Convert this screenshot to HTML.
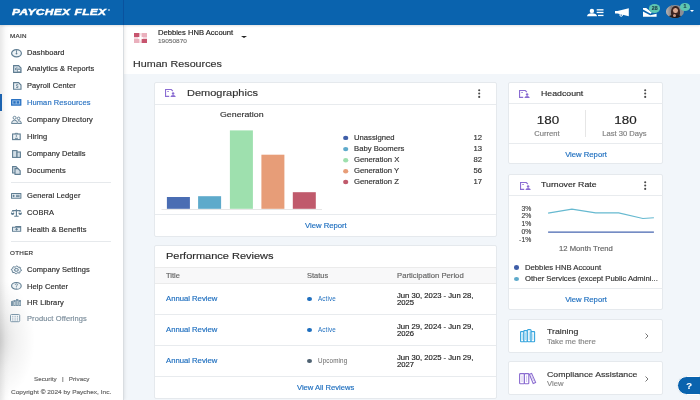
<!DOCTYPE html>
<html><head><meta charset="utf-8">
<style>
*{margin:0;padding:0;box-sizing:border-box}
html,body{width:700px;height:400px;overflow:hidden;background:#f2f6fa;font-family:"Liberation Sans",sans-serif;color:#333}
.a{position:absolute;white-space:nowrap}
svg{position:absolute;overflow:visible}
#hdr{position:absolute;left:0;top:0;width:700px;height:25px;background:#0a63ae;z-index:5;box-shadow:0 1px 2px rgba(0,0,0,0.12)}
#side{position:absolute;left:0;top:25px;width:124px;height:375px;background:#fff;border-right:1px solid #d9dde1;box-shadow:1px 0 3px rgba(0,0,0,0.08);z-index:2}
#top{position:absolute;left:124px;top:25px;width:576px;height:48.5px;background:#fff}
.card{position:absolute;background:#fff;border:1px solid #e5e9ed;border-radius:2px}
.si{position:absolute;left:27px;font-size:6.53px;line-height:10px;color:#333;white-space:nowrap;transform:scaleX(1.1494);transform-origin:0 0}
.lnk{color:#1f6fbf}
.kb{position:absolute;width:2px}
.kb i{display:block;width:2px;height:2px;border-radius:1px;background:#555;margin-bottom:1.5px}
.hr{position:absolute;height:1px;background:#e8ebee}
.ic{stroke:#5b7b92;fill:none;stroke-width:1}
.pi{stroke:#8b6fd1;fill:none;stroke-width:1}
.a{-webkit-text-stroke:0.15px currentColor} .si{-webkit-text-stroke:0.15px currentColor;letter-spacing:0.09px;color:#2e2e2e} body{filter:blur(0.3px)}
</style></head><body>
<div id="hdr">
  <div class="a" style="left:12px;top:6.2px;font-size:9.7px;line-height:12px;font-weight:bold;font-style:italic;color:#fff;transform:scaleX(1.235);transform-origin:0 0;letter-spacing:0.25px;word-spacing:0.6px;-webkit-text-stroke:0.45px #fff">PAYCHEX FLEX</div><div style="position:absolute;left:107.5px;top:8.5px;width:2px;height:2px;border-radius:50%;border:0.4px solid rgba(255,255,255,0.8)"></div>
  <div style="position:absolute;left:123px;top:0;width:1px;height:25px;background:#0a529e"></div>
  <!-- contacts icon -->
  <svg style="left:586.8px;top:8px" width="17" height="9" viewBox="0 0 17 9">
    <circle cx="4.9" cy="2.9" r="2.2" fill="#fff"/>
    <path d="M0 8.3 Q0.3 5.2 4.9 5.2 Q9.5 5.2 10.1 8.3 Z" fill="#fff"/>
    <rect x="9.7" y="1.2" width="6.8" height="1.3" fill="#fff"/>
    <rect x="9.7" y="3.8" width="6.8" height="1.3" fill="#fff"/>
    <rect x="11" y="6.8" width="5.5" height="1.3" fill="#fff"/>
  </svg>
  <!-- megaphone -->
  <svg style="left:615px;top:8px" width="15" height="9" viewBox="0 0 15 9">
    <path d="M0 3 H2.5 L13.8 0.3 V8.3 L2.5 5.5 H0 Z" fill="#fff"/>
    <circle cx="6.2" cy="7" r="1.3" fill="none" stroke="#fff" stroke-width="1"/>
  </svg>
  <!-- inbox -->
  <svg style="left:642.5px;top:8px" width="14" height="9" viewBox="0 0 14 9">
    <path d="M0 0 H3.2 L8.8 4.4 L7.6 5.7 L0 1.5 Z" fill="#fff"/>
    <path d="M0 3.4 L7.2 7.3 L13.6 5.8 V8.8 H0 Z" fill="#fff"/>
  </svg>
  <div style="position:absolute;left:648.9px;top:4.2px;width:11.4px;height:8.7px;border-radius:50%;background:#5ec7b2"></div>
  <div class="a" style="left:649px;top:5px;width:11.4px;text-align:center;font-size:4.52px;line-height:7px;font-weight:bold;color:#1d3f4a;transform:scaleX(1.1494);transform-origin:50% 0">28</div>
  <!-- avatar -->
  <div style="position:absolute;left:666.3px;top:5.1px;width:17.4px;height:13px;border-radius:50%;overflow:hidden;background:#8a8e96">
    <div style="position:absolute;left:0;top:0;width:6px;height:13px;background:linear-gradient(90deg,#b9b6b8,#7f7a7c)"></div>
    <div style="position:absolute;left:4.5px;top:0.5px;width:9px;height:13px;border-radius:45%;background:#3b2320"></div>
    <div style="position:absolute;left:6.5px;top:2.5px;width:5px;height:5.5px;border-radius:50%;background:#d8a890"></div>
    <div style="position:absolute;left:2px;top:9.5px;width:14px;height:6px;border-radius:40%;background:#1e1a1c"></div>
    <div style="position:absolute;left:7px;top:8.5px;width:3px;height:3px;border-radius:50%;background:#c99580"></div>
  </div>
  <div style="position:absolute;left:679.5px;top:3px;width:10px;height:7.6px;border-radius:50%;background:#5ec7b2"></div>
  <div class="a" style="left:679.5px;top:3.3px;width:10px;text-align:center;font-size:4.52px;line-height:7px;font-weight:bold;color:#1d3f4a;transform:scaleX(1.1494);transform-origin:50% 0">1</div>
  <div style="position:absolute;left:690.2px;top:10.2px;width:0;height:0;border-left:2.2px solid transparent;border-right:2.2px solid transparent;border-top:2.8px solid #fff"></div>
</div>

<div id="side">
  <div style="position:absolute;left:-40px;top:255px;width:75px;height:120px;background:radial-gradient(ellipse 50% 50% at 50% 50%,rgba(0,0,0,0.14),rgba(0,0,0,0.05) 50%,rgba(0,0,0,0) 100%)"></div><div style="position:absolute;left:0;top:0;width:9px;height:375px;background:linear-gradient(90deg,rgba(0,0,0,0.09),rgba(0,0,0,0.02) 60%,rgba(0,0,0,0))"></div>
  <div class="a" style="left:10px;top:6.8px;font-size:5.48px;line-height:8px;color:#333;letter-spacing:0.25px;-webkit-text-stroke:0.15px #333;transform:scaleX(1.1494);transform-origin:0 0">MAIN</div>
  <!-- icons -->
  <svg style="left:11px;top:24px" width="11" height="9" viewBox="0 0 11 9"><ellipse cx="5.5" cy="4.2" rx="4.9" ry="3.6" fill="#eef3f6" stroke="#5f7d92" stroke-width="1.2"/><path d="M5.5 1.3 V3.8" stroke="#5f7d92" stroke-width="0.9"/><circle cx="5.5" cy="4.6" r="0.9" fill="#5f7d92"/></svg>
  <svg style="left:12.5px;top:40.4px" width="9" height="8" viewBox="0 0 9 8"><path d="M0.6 0.6 H5.6 L8 3 V7.4 H0.6 Z" fill="#d3dee6" stroke="#5f7d92" stroke-width="1.1"/><path d="M2.5 5 V3 M3.9 5 V2.2" stroke="#5f7d92" stroke-width="0.8"/><circle cx="6" cy="5.6" r="1.6" fill="#fff" stroke="#5f7d92" stroke-width="1"/></svg>
  <svg style="left:12.5px;top:56.6px" width="9" height="8" viewBox="0 0 9 8"><path d="M0.6 0.6 H5.6 L8 3 V7.2 H0.6 Z" fill="#eef3f6" stroke="#5f7d92" stroke-width="1.1"/><path d="M5.3 2.9 Q4.3 2.2 3.4 2.8 Q2.8 3.6 4.2 4 Q5.6 4.4 5 5.3 Q4.2 5.9 3.1 5.2" fill="none" stroke="#5f7d92" stroke-width="0.9"/></svg>
  <svg style="left:11px;top:74.2px" width="11" height="7" viewBox="0 0 11 7"><rect x="0" y="0" width="10.4" height="6.8" rx="0.6" fill="#2a72c2"/><rect x="1.3" y="1.4" width="7.8" height="4" fill="#9cc1e6"/><rect x="2.3" y="2.2" width="2.4" height="2.4" fill="#2a72c2"/><rect x="5.7" y="2.2" width="2.4" height="2.4" fill="#2a72c2"/></svg>
  <svg style="left:11px;top:91px" width="11" height="8" viewBox="0 0 11 8"><circle cx="3.6" cy="1.8" r="1.5" fill="none" stroke="#5f7d92" stroke-width="0.9"/><path d="M0.5 7.5 Q0.6 4.2 3.6 4.2 Q6.6 4.2 6.7 7.5 Z" fill="#dfe7ec" stroke="#5f7d92" stroke-width="0.9"/><circle cx="7.6" cy="2.4" r="1.3" fill="none" stroke="#5f7d92" stroke-width="0.9"/><path d="M6.9 4.6 Q10.3 4.3 10.5 7.5 H6.9" fill="#dfe7ec" stroke="#5f7d92" stroke-width="0.9"/></svg>
  <svg style="left:12.2px;top:107.6px" width="9" height="7" viewBox="0 0 9 7"><rect x="0.6" y="1" width="7.6" height="5.6" fill="#eef3f6" stroke="#5f7d92" stroke-width="1.1"/><path d="M3.2 1 V0.3 H5.6 V1" stroke="#5f7d92" stroke-width="0.8" fill="none"/><circle cx="4.4" cy="3" r="0.8" fill="#5f7d92"/><path d="M2.9 5.3 H5.9" stroke="#5f7d92" stroke-width="1"/></svg>
  <svg style="left:12.2px;top:124.8px" width="9" height="8" viewBox="0 0 9 8"><rect x="0.6" y="0.6" width="4.4" height="6.8" fill="#d3dee6" stroke="#5f7d92" stroke-width="1.1"/><rect x="5" y="2" width="3.4" height="5.4" fill="#d3dee6" stroke="#5f7d92" stroke-width="1.1"/></svg>
  <svg style="left:12.2px;top:141px" width="9" height="9" viewBox="0 0 9 9"><path d="M0.6 0.6 H4 L5.6 2.2 V7 H0.6Z" fill="#d3dee6" stroke="#5f7d92" stroke-width="1.1"/><path d="M3 2.6 H6 L8.2 4.8 V8.4 H3Z" fill="#d3dee6" stroke="#5f7d92" stroke-width="1.1"/></svg>
  <svg style="left:11px;top:167.8px" width="11" height="6" viewBox="0 0 11 6"><rect x="0" y="0" width="10.4" height="5.8" rx="0.5" fill="#5f7d92"/><rect x="1" y="1" width="8.4" height="3.8" fill="#dfe8ee"/><path d="M2.6 1.6 L3.8 2.9 L2.6 4.2 L1.4 2.9Z" fill="#5f7d92"/><rect x="5" y="1.8" width="3.6" height="0.9" fill="#5f7d92"/><rect x="5" y="3.2" width="3.6" height="0.9" fill="#5f7d92"/></svg>
  <svg style="left:11px;top:184px" width="11" height="8" viewBox="0 0 11 8"><path d="M5.4 0.3 V7 M3.2 7.3 H7.6 M1.2 1.6 H9.6" stroke="#5f7d92" stroke-width="1.1"/><path d="M-0.2 3.9 H3.4 Q3.2 6 1.6 6 Q0 6 -0.2 3.9Z M7.4 3.9 H11 Q10.8 6 9.2 6 Q7.6 6 7.4 3.9Z" fill="#5f7d92"/><path d="M0.3 3.9 L1.6 1.6 L2.9 3.9 M7.9 3.9 L9.2 1.6 L10.5 3.9" stroke="#5f7d92" stroke-width="0.6" fill="none"/></svg>
  <svg style="left:11.6px;top:201.2px" width="10" height="6" viewBox="0 0 10 6"><path d="M0 0.8 H3 L3.6 0 H9.2 V5.8 H0Z" fill="#5f7d92"/><rect x="1" y="1.7" width="7.2" height="3.2" fill="#dfe8ee"/><path d="M4.6 2 V4.6 M3.3 3.3 H5.9" stroke="#5f7d92" stroke-width="1"/></svg>
  <svg style="left:11px;top:241.2px" width="11" height="8" viewBox="0 0 11 8"><path d="M5.40 0.10 L6.39 0.17 L7.01 1.04 L7.73 1.32 L9.01 1.21 L9.64 1.79 L9.28 2.71 L9.52 3.30 L10.50 3.90 L10.40 4.64 L9.28 5.09 L8.89 5.62 L9.01 6.59 L8.23 7.06 L7.01 6.76 L6.22 6.94 L5.40 7.70 L4.41 7.63 L3.79 6.76 L3.07 6.48 L1.79 6.59 L1.16 6.01 L1.52 5.09 L1.28 4.50 L0.30 3.90 L0.40 3.16 L1.52 2.71 L1.91 2.18 L1.79 1.21 L2.57 0.74 L3.79 1.04 L4.58 0.86Z" fill="#eef3f6" stroke="#5f7d92" stroke-width="1" stroke-linejoin="round"/><ellipse cx="5.4" cy="3.9" rx="1.9" ry="1.4" fill="none" stroke="#5f7d92" stroke-width="1"/></svg>
  <svg style="left:11px;top:257.4px" width="11" height="8" viewBox="0 0 11 8"><ellipse cx="5.4" cy="3.9" rx="4.8" ry="3.4" fill="#eef3f6" stroke="#5f7d92" stroke-width="1.1"/><path d="M4.2 2.9 Q4.3 1.8 5.4 1.8 Q6.6 1.8 6.5 2.8 Q6.4 3.5 5.4 4 V4.8" fill="none" stroke="#5f7d92" stroke-width="0.8"/><circle cx="5.4" cy="5.9" r="0.5" fill="#5f7d92"/></svg>
  <svg style="left:11px;top:274.4px" width="10" height="7" viewBox="0 0 10 7"><path d="M0 2.2 L2.4 1.4 V7 H0Z M2.6 1 H4.8 V7 H2.6Z M5 0 H7.4 V7 H5Z M7.6 1 H10 V7 H7.6Z" fill="#7d97a9"/><path d="M3.7 3 V6 M6.2 2 V6 M8.8 3 V6" stroke="#eef3f6" stroke-width="0.7"/></svg>
  <svg style="left:10.3px;top:289px" width="10" height="8" viewBox="0 0 10 8"><rect x="0.5" y="0.5" width="9.2" height="7.2" rx="1" fill="#f3f6f8" stroke="#7d97a9" stroke-width="1"/><g fill="#8ea5b5"><circle cx="2.8" cy="2.3" r="0.6"/><circle cx="5.1" cy="2.3" r="0.6"/><circle cx="7.4" cy="2.3" r="0.6"/><circle cx="2.8" cy="4.1" r="0.6"/><circle cx="5.1" cy="4.1" r="0.6"/><circle cx="7.4" cy="4.1" r="0.6"/><circle cx="2.8" cy="5.9" r="0.6"/><circle cx="5.1" cy="5.9" r="0.6"/><circle cx="7.4" cy="5.9" r="0.6"/></g></svg>

  <div class="si" style="top:22.6px">Dashboard</div>
  <div class="si" style="top:39.1px">Analytics &amp; Reports</div>
  <div class="si" style="top:55.6px">Payroll Center</div>
  <div style="position:absolute;left:0;top:68.5px;width:2px;height:17px;background:#1c63b0"></div>
  <div class="si" style="top:72.6px;color:#2a73c2">Human Resources</div>
  <div class="si" style="top:89.6px">Company Directory</div>
  <div class="si" style="top:106.6px">Hiring</div>
  <div class="si" style="top:123.6px">Company Details</div>
  <div class="si" style="top:140.6px">Documents</div>
  <div class="hr" style="left:11px;top:157px;width:100px;background:#e6e9ec"></div>
  <div class="si" style="top:166.1px">General Ledger</div>
  <div class="si" style="top:182.6px">COBRA</div>
  <div class="si" style="top:199.6px">Health &amp; Benefits</div>
  <div class="hr" style="left:11px;top:216px;width:100px;background:#e6e9ec"></div>
  <div class="a" style="left:10px;top:224px;font-size:5.48px;line-height:8px;color:#333;letter-spacing:0.25px;-webkit-text-stroke:0.15px #333;transform:scaleX(1.1494);transform-origin:0 0">OTHER</div>
  <div class="si" style="top:239.6px">Company Settings</div>
  <div class="si" style="top:256.6px">Help Center</div>
  <div class="si" style="top:273.1px">HR Library</div>
  <div class="si" style="top:289.1px;color:#7b8d9b">Product Offerings</div>
  <div class="a" style="left:33.5px;top:350px;font-size:5.48px;line-height:8px;color:#666;transform:scaleX(1.1494);transform-origin:0 0">Security &nbsp;&nbsp;|&nbsp;&nbsp; Privacy</div>
  <div class="a" style="left:11px;top:362.5px;font-size:5.66px;line-height:8px;color:#666;transform:scaleX(1.1494);transform-origin:0 0">Copyright © 2024 by Paychex, Inc.</div>
</div>

<div id="top">
  <svg style="left:10px;top:8px" width="13" height="10" viewBox="0 0 13 10">
    <rect x="0" y="0" width="5.6" height="4.2" fill="#c7546e"/><rect x="7.4" y="0" width="5.6" height="4.2" fill="#eab0bd"/>
    <rect x="0" y="5.8" width="5.6" height="4.2" fill="#eab0bd"/><rect x="7.4" y="5.8" width="5.6" height="4.2" fill="#c7546e"/>
    <rect x="0" y="4.2" width="5.6" height="1.6" fill="#f3d3da"/><rect x="7.4" y="4.2" width="5.6" height="1.6" fill="#f3d3da"/>
    <rect x="5.6" y="0" width="1.8" height="10" fill="#f7e3e7"/>
    <rect x="4" y="4.3" width="5" height="1.4" fill="#fff"/><rect x="5.8" y="2.5" width="1.4" height="5" fill="#fff"/>
  </svg>
  <div class="a" style="left:34px;top:3px;font-size:6.61px;line-height:10px;color:#222;transform:scaleX(1.1494);transform-origin:0 0">Debbies HNB Account</div>
  <div class="a" style="left:34px;top:12px;font-size:5.66px;line-height:8px;color:#777;transform:scaleX(1.1494);transform-origin:0 0">19050870</div>
  <div style="position:absolute;left:116.5px;top:10.8px;width:0;height:0;border-left:3px solid transparent;border-right:3px solid transparent;border-top:2.8px solid #222"></div>
  <div class="a" style="left:9px;top:32px;font-size:8.81px;line-height:14px;color:#333;transform:scaleX(1.2195);transform-origin:0 0">Human Resources</div>
</div>

<!-- Demographics -->
<div class="card" style="left:154px;top:82px;width:343px;height:155px">
  <svg style="left:10px;top:6px" width="11" height="8" viewBox="0 0 11 8"><path d="M4.2 7.4 H0.55 V0.55 H6.3 L7.9 2.1" fill="none" stroke="#8a6cd2" stroke-width="1.1"/><rect x="2.2" y="2.1" width="1.7" height="0.9" rx="0.4" fill="#8a6cd2"/><circle cx="8.1" cy="4.4" r="1.25" fill="#8a6cd2"/><path d="M5.4 8 Q5.6 5.9 8.1 5.9 Q10.6 5.9 10.8 8Z" fill="#8a6cd2"/></svg>
  <svg style="left:323px;top:6.1px" width="2.4" height="9" viewBox="0 0 2.4 9"><circle cx="1.2" cy="1.2" r="1.05" fill="#4a4a4a"/><circle cx="1.2" cy="4.55" r="1.05" fill="#4a4a4a"/><circle cx="1.2" cy="7.9" r="1.05" fill="#4a4a4a"/></svg>
  <div class="a" style="left:32px;top:3px;font-size:9.02px;line-height:14px;color:#333;transform:scaleX(1.2195);transform-origin:0 0">Demographics</div>
  <div class="hr" style="left:0;top:20.5px;width:341px"></div>
  <div class="a" style="left:65px;top:27px;font-size:7.66px;line-height:10px;color:#333;transform:scaleX(1.1494);transform-origin:0 0">Generation</div>
  <svg style="left:5px;top:47px" width="163" height="81" viewBox="0 0 163 81">
    <rect x="6.9" y="67" width="23" height="11.8" fill="#4a6db3"/>
    <rect x="38.1" y="66.2" width="23" height="12.6" fill="#5eaacb"/>
    <rect x="69.9" y="0.4" width="23" height="78.4" fill="#9ee0ae"/>
    <rect x="101.4" y="24.7" width="23" height="54.1" fill="#e79d78"/>
    <rect x="132.8" y="62.2" width="23" height="16.6" fill="#c05a6c"/>
    <path d="M1.5 79.5 H162" stroke="#e6e6e6" stroke-width="1"/>
  </svg>
  <svg style="left:188px;top:51.5px" width="6" height="50" viewBox="0 0 6 50">
    <ellipse cx="2.7" cy="2.9" rx="2.6" ry="2.2" fill="#3f5ea8"/>
    <ellipse cx="2.7" cy="14.1" rx="2.6" ry="2.2" fill="#5eaacb"/>
    <ellipse cx="2.7" cy="25.3" rx="2.6" ry="2.2" fill="#9ee0ae"/>
    <ellipse cx="2.7" cy="36.3" rx="2.6" ry="2.2" fill="#e79d78"/>
    <ellipse cx="2.7" cy="47" rx="2.6" ry="2.2" fill="#c05a6c"/>
  </svg>
  <div class="a" style="left:199px;top:48.5px;font-size:6.7px;line-height:11.1px;color:#333;transform:scaleX(1.1494);transform-origin:0 0">Unassigned<br>Baby Boomers<br>Generation X<br>Generation Y<br>Generation Z</div>
  <div class="a" style="left:300px;top:49px;width:27px;text-align:right;font-size:6.7px;line-height:11.1px;color:#333;transform:scaleX(1.1494);transform-origin:100% 0">12<br>13<br>82<br>56<br>17</div>
  <div class="hr" style="left:0;top:131px;width:341px"></div>
  <div class="a lnk" style="left:150px;top:138px;font-size:6.7px;line-height:10px;transform:scaleX(1.1494);transform-origin:0 0">View Report</div>
</div>

<!-- Performance Reviews -->
<div class="card" style="left:154px;top:245px;width:343px;height:154px">
  <div class="a" style="left:11px;top:3px;font-size:9.02px;line-height:14px;color:#2b2b2b;transform:scaleX(1.2195);transform-origin:0 0">Performance Reviews</div>
  <div style="position:absolute;left:0;top:21px;width:341px;height:16.5px;background:#f8f8f9;border-top:1px solid #ebebeb;border-bottom:1px solid #ebebeb"></div>
  <div class="a" style="left:11px;top:24.5px;font-size:6.53px;line-height:10px;color:#666;transform:scaleX(1.1494);transform-origin:0 0">Title</div>
  <div class="a" style="left:152.3px;top:24.5px;font-size:6.53px;line-height:10px;color:#666;transform:scaleX(1.1494);transform-origin:0 0">Status</div>
  <div class="a" style="left:242px;top:24.5px;font-size:6.7px;line-height:10px;color:#666;transform:scaleX(1.1494);transform-origin:0 0">Participation Period</div>

  <div class="a lnk" style="left:11px;top:47.5px;font-size:6.7px;line-height:10px;transform:scaleX(1.1494);transform-origin:0 0">Annual Review</div>
  <div style="position:absolute;left:152.3px;top:51px;width:4.5px;height:3.8px;border-radius:50%;background:#1f6fbf"></div>
  <div class="a lnk" style="left:163px;top:47.8px;font-size:6.3px;line-height:9px;letter-spacing:0.12px;-webkit-text-stroke:0;">Active</div>
  <div class="a" style="left:242px;top:45.5px;font-size:6.7px;line-height:7.5px;color:#222;transform:scaleX(1.1494);transform-origin:0 0">Jun 30, 2023 - Jun 28,<br>2025</div>
  <div class="hr" style="left:0;top:68px;width:341px"></div>

  <div class="a lnk" style="left:11px;top:78.5px;font-size:6.7px;line-height:10px;transform:scaleX(1.1494);transform-origin:0 0">Annual Review</div>
  <div style="position:absolute;left:152.3px;top:82px;width:4.5px;height:3.8px;border-radius:50%;background:#1f6fbf"></div>
  <div class="a lnk" style="left:163px;top:78.8px;font-size:6.3px;line-height:9px;letter-spacing:0.12px;-webkit-text-stroke:0;">Active</div>
  <div class="a" style="left:242px;top:76.5px;font-size:6.7px;line-height:7.5px;color:#222;transform:scaleX(1.1494);transform-origin:0 0">Jun 29, 2024 - Jun 29,<br>2026</div>
  <div class="hr" style="left:0;top:99px;width:341px"></div>

  <div class="a lnk" style="left:11px;top:109.5px;font-size:6.7px;line-height:10px;transform:scaleX(1.1494);transform-origin:0 0">Annual Review</div>
  <div style="position:absolute;left:152.3px;top:113px;width:4.5px;height:3.8px;border-radius:50%;background:#4f6272"></div>
  <div class="a" style="left:163px;top:109.8px;font-size:6.3px;line-height:9px;letter-spacing:0.12px;-webkit-text-stroke:0;color:#666">Upcoming</div>
  <div class="a" style="left:242px;top:107.5px;font-size:6.7px;line-height:7.5px;color:#222;transform:scaleX(1.1494);transform-origin:0 0">Jun 30, 2025 - Jun 29,<br>2027</div>
  <div class="hr" style="left:0;top:130px;width:341px"></div>
  <div class="a lnk" style="left:142px;top:137px;font-size:6.61px;line-height:10px;transform:scaleX(1.1494);transform-origin:0 0">View All Reviews</div>
</div>

<!-- Headcount -->
<div class="card" style="left:508px;top:82px;width:155px;height:81.5px">
  <svg style="left:10.2px;top:6.5px" width="11" height="8" viewBox="0 0 11 8"><path d="M4.2 7.4 H0.55 V0.55 H6.3 L7.9 2.1" fill="none" stroke="#8a6cd2" stroke-width="1.1"/><rect x="2.2" y="2.1" width="1.7" height="0.9" rx="0.4" fill="#8a6cd2"/><circle cx="8.1" cy="4.4" r="1.25" fill="#8a6cd2"/><path d="M5.4 8 Q5.6 5.9 8.1 5.9 Q10.6 5.9 10.8 8Z" fill="#8a6cd2"/></svg>
  <svg style="left:135.3px;top:6.1px" width="2.4" height="9" viewBox="0 0 2.4 9"><circle cx="1.2" cy="1.2" r="1.05" fill="#4a4a4a"/><circle cx="1.2" cy="4.55" r="1.05" fill="#4a4a4a"/><circle cx="1.2" cy="7.9" r="1.05" fill="#4a4a4a"/></svg>
  <div class="a" style="left:32px;top:5.6px;font-size:7.61px;line-height:10px;color:#2a2a2a;transform:scaleX(1.1494);transform-origin:0 0">Headcount</div>
  <div class="hr" style="left:0;top:20px;width:154px"></div>
  <div class="a" style="left:-0.5px;top:31px;width:78px;text-align:center;font-size:10px;line-height:14px;color:#222;transform:scaleX(1.34);transform-origin:50% 0">180</div>
  <div class="a" style="left:-1px;top:46px;width:78px;text-align:center;font-size:6.61px;line-height:10px;color:#808080;transform:scaleX(1.1494);transform-origin:50% 0">Current</div>
  <div style="position:absolute;left:75.6px;top:27px;width:1px;height:27px;background:#e6e6e6"></div>
  <div class="a" style="left:77.5px;top:31px;width:77px;text-align:center;font-size:10px;line-height:14px;color:#222;transform:scaleX(1.34);transform-origin:50% 0">180</div>
  <div class="a" style="left:77px;top:46px;width:77px;text-align:center;font-size:6.61px;line-height:10px;color:#808080;transform:scaleX(1.1494);transform-origin:50% 0">Last 30 Days</div>
  <div class="hr" style="left:0;top:60px;width:154px"></div>
  <div class="a lnk" style="left:0;top:67px;width:154px;text-align:center;font-size:6.7px;line-height:10px;transform:scaleX(1.1494);transform-origin:50% 0">View Report</div>
</div>

<!-- Turnover -->
<div class="card" style="left:508px;top:173.5px;width:155px;height:136.5px">
  <svg style="left:10.8px;top:7px" width="11" height="8" viewBox="0 0 11 8"><path d="M4.2 7.4 H0.55 V0.55 H6.3 L7.9 2.1" fill="none" stroke="#8a6cd2" stroke-width="1.1"/><rect x="2.2" y="2.1" width="1.7" height="0.9" rx="0.4" fill="#8a6cd2"/><circle cx="8.1" cy="4.4" r="1.25" fill="#8a6cd2"/><path d="M5.4 8 Q5.6 5.9 8.1 5.9 Q10.6 5.9 10.8 8Z" fill="#8a6cd2"/></svg>
  <svg style="left:135px;top:6.8px" width="2.4" height="9" viewBox="0 0 2.4 9"><circle cx="1.2" cy="1.2" r="1.05" fill="#4a4a4a"/><circle cx="1.2" cy="4.55" r="1.05" fill="#4a4a4a"/><circle cx="1.2" cy="7.9" r="1.05" fill="#4a4a4a"/></svg>
  <div class="a" style="left:32px;top:5.3px;font-size:7.61px;line-height:10px;color:#2a2a2a;transform:scaleX(1.1494);transform-origin:0 0">Turnover Rate</div>
  <div class="hr" style="left:0;top:20.5px;width:154px"></div>
  <div class="a" style="left:2px;top:30px;width:20.5px;text-align:right;font-size:6.8px;line-height:7.9px;color:#444;letter-spacing:0.1px">3%<br>2%<br>1%<br>0%<br>-1%</div>
  <svg style="left:38.2px;top:31px" width="108" height="28" viewBox="0 0 108 28">
    <polyline points="1.1,7.1 24.9,3.1 48.6,6.9 71.7,6.9 95.9,12.5 106.9,11.7" fill="none" stroke="#66b9d0" stroke-width="1.1"/>
    <path d="M1.1 26.1 H106.9" stroke="#4766b0" stroke-width="1.1"/>
  </svg>
  <div class="a" style="left:50px;top:69px;font-size:6.7px;line-height:10px;color:#666;transform:scaleX(1.1494);transform-origin:0 0">12 Month Trend</div>
  <div style="position:absolute;left:5px;top:90.8px;width:5.2px;height:4.4px;border-radius:50%;background:#3f5ea8"></div>
  <div class="a" style="left:16px;top:88.3px;font-size:6.7px;line-height:10px;color:#333;transform:scaleX(1.1494);transform-origin:0 0">Debbies HNB Account</div>
  <div style="position:absolute;left:5px;top:102.1px;width:5.2px;height:4.4px;border-radius:50%;background:#5eaacb"></div>
  <div class="a" style="left:16px;top:99.6px;font-size:6.7px;line-height:10px;color:#333;transform:scaleX(1.1494);transform-origin:0 0">Other Services (except Public Admini...</div>
  <div class="hr" style="left:0;top:113px;width:154px"></div>
  <div class="a lnk" style="left:0;top:120px;width:154px;text-align:center;font-size:6.7px;line-height:10px;transform:scaleX(1.1494);transform-origin:50% 0">View Report</div>
</div>

<!-- Training -->
<div class="card" style="left:508px;top:319px;width:155px;height:33.5px">
  <svg style="left:11px;top:8.8px" width="16" height="14" viewBox="0 0 16 14">
    <g fill="#fff" stroke="#36a5dd" stroke-width="1.1">
      <rect x="0.6" y="2.6" width="3.3" height="10.2" rx="0.5"/><rect x="3.9" y="1.6" width="3.4" height="11.2" rx="0.5"/><rect x="7.3" y="0.6" width="3.8" height="12.2" rx="1"/><rect x="11.1" y="2.6" width="3.5" height="10.2" rx="0.5"/>
    </g>
    <path d="M2.2 4.5 V11 M5.6 3.5 V11 M9.2 2.5 V11 M12.8 4.5 V11" stroke="#8fd0ef" stroke-width="0.8"/>
  </svg>
  <svg style="left:136px;top:13px" width="4" height="6" viewBox="0 0 4 6"><path d="M0.5 0.5 L3 3 L0.5 5.5" fill="none" stroke="#666" stroke-width="0.9"/></svg>
  <div class="a" style="left:37.5px;top:6.8px;font-size:7.61px;line-height:10px;color:#333;transform:scaleX(1.1494);transform-origin:0 0">Training</div>
  <div class="a" style="left:37.5px;top:16.8px;font-size:6.7px;line-height:10px;color:#888;transform:scaleX(1.1494);transform-origin:0 0">Take me there</div>
</div>

<!-- Compliance -->
<div class="card" style="left:508px;top:361px;width:155px;height:34px">
  <svg style="left:10px;top:11px" width="18" height="12" viewBox="0 0 18 12">
    <g fill="#fff" stroke="#8a6bd0" stroke-width="1.1">
      <rect x="0.6" y="0.6" width="4.8" height="10.2" rx="0.8"/><rect x="5.4" y="0.6" width="4.4" height="10.2" rx="0.8"/>
      <path d="M10.4 1.2 L12.6 0.4 L16.6 9.4 L14.2 10.6Z"/>
    </g>
    <path d="M3 2.5 V9 M7.6 2.5 V9 M12.6 2.5 L14.6 8" stroke="#c7b6ea" stroke-width="0.8"/>
  </svg>
  <svg style="left:136px;top:13.6px" width="4" height="6" viewBox="0 0 4 6"><path d="M0.5 0.5 L3 3 L0.5 5.5" fill="none" stroke="#666" stroke-width="0.9"/></svg>
  <div class="a" style="left:37.5px;top:7.5px;font-size:7.61px;line-height:10px;color:#333;transform:scaleX(1.1494);transform-origin:0 0">Compliance Assistance</div>
  <div class="a" style="left:37.5px;top:17.1px;font-size:6.7px;line-height:10px;color:#888;transform:scaleX(1.1494);transform-origin:0 0">View</div>
</div>

<!-- help button -->
<div style="position:absolute;left:677px;top:376.2px;width:32px;height:18.6px;border-radius:10px;background:#0a63ae;border:1px solid #fff;box-shadow:0 0 1px rgba(0,0,0,0.1)"></div>
<div class="a" style="left:686.3px;top:381.2px;font-size:9.5px;line-height:10px;font-weight:bold;color:#fff">?</div>

</body></html>
